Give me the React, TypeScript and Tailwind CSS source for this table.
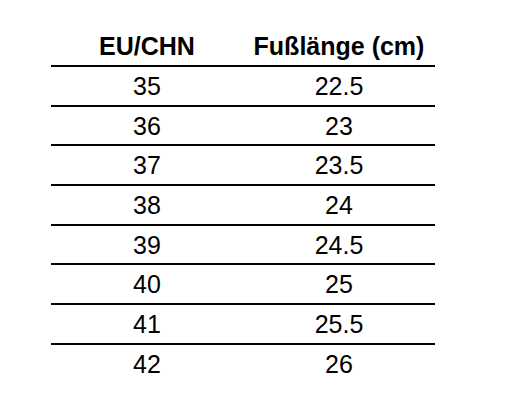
import React from 'react'

const rows = [
  ['35', '22.5'],
  ['36', '23'],
  ['37', '23.5'],
  ['38', '24'],
  ['39', '24.5'],
  ['40', '25'],
  ['41', '25.5'],
  ['42', '26'],
]

const App = () => {
  return (
    <div className="w-[505px] h-[403px] bg-white text-black font-['Liberation_Sans',Arial,sans-serif] pt-[33px]">
      <div className="ml-[51px] w-[384px]">
        <div className="grid grid-cols-2 h-[34px] border-b-2 border-black text-[25px] font-bold leading-[27px] text-center">
          <div>EU/CHN</div>
          <div>Fußlänge (cm)</div>
        </div>
        {rows.map(([eu, cm], i) => (
          <div
            key={eu}
            className={
              i < rows.length - 1
                ? 'grid grid-cols-2 h-[39.7px] border-b-2 border-black text-[25px] leading-[39px] text-center'
                : 'grid grid-cols-2 h-[39.7px] text-[25px] leading-[39px] text-center'
            }
          >
            <div>{eu}</div>
            <div>{cm}</div>
          </div>
        ))}
      </div>
    </div>
  )
}

export default App
